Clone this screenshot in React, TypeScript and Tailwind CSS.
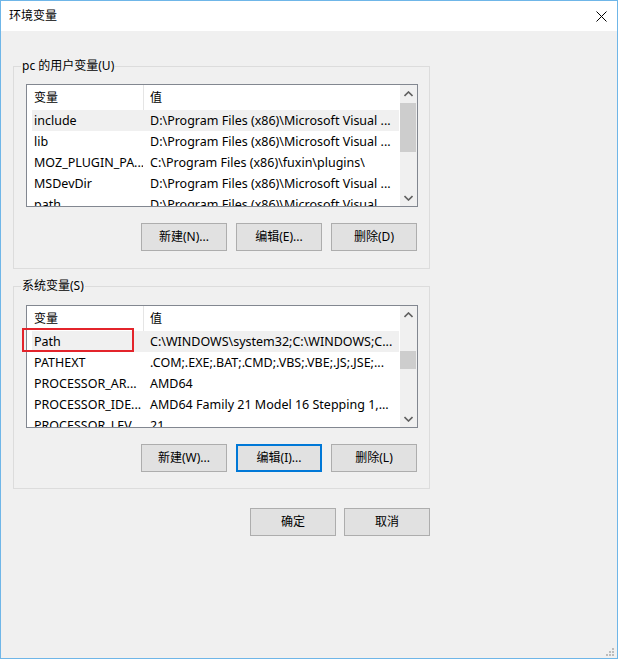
import React from "react";

type Row = [string, string];

const userVars: Row[] = [
  ["include", "D:\\Program Files (x86)\\Microsoft Visual ..."],
  ["lib", "D:\\Program Files (x86)\\Microsoft Visual ..."],
  ["MOZ_PLUGIN_PA...", "C:\\Program Files (x86)\\fuxin\\plugins\\"],
  ["MSDevDir", "D:\\Program Files (x86)\\Microsoft Visual ..."],
  ["path", "D:\\Program Files (x86)\\Microsoft Visual ..."],
];

const systemVars: Row[] = [
  ["Path", "C:\\WINDOWS\\system32;C:\\WINDOWS;C..."],
  ["PATHEXT", ".COM;.EXE;.BAT;.CMD;.VBS;.VBE;.JS;.JSE;..."],
  ["PROCESSOR_AR...", "AMD64"],
  ["PROCESSOR_IDE...", "AMD64 Family 21 Model 16 Stepping 1,..."],
  ["PROCESSOR_LEV...", "21"],
];

const font = {
  fontFamily: '"Noto Sans", "Noto Sans CJK SC", sans-serif',
};

function Chevron({ up }: { up?: boolean }) {
  return (
    <svg width="9" height="6" viewBox="0 0 9 6" className="block">
      <path
        d={up ? "M0.5 5 L4.5 1 L8.5 5" : "M0.5 1 L4.5 5 L8.5 1"}
        fill="none"
        stroke="#606060"
        strokeWidth="1.6"
      />
    </svg>
  );
}

function ScrollBar({ thumbTop, thumbHeight }: { thumbTop: number; thumbHeight: number }) {
  return (
    <div className="relative w-[17px] h-full bg-[#f0f0f0] flex flex-col justify-between">
      <div className="h-[17px] flex items-center justify-center">
        <Chevron up />
      </div>
      <div
        className="absolute left-0 w-[16px] bg-[#cdcdcd]"
        style={{ top: thumbTop, height: thumbHeight }}
      />
      <div className="h-[17px] flex items-center justify-center">
        <Chevron />
      </div>
    </div>
  );
}

function ListView({
  rows,
  thumbTop,
  thumbHeight,
}: {
  rows: Row[];
  thumbTop: number;
  thumbHeight: number;
}) {
  return (
    <div className="h-[123px] w-[392px] border border-[#828790] bg-white flex overflow-hidden">
      <div className="flex-1 flex flex-col overflow-hidden">
        <div className="h-[25px] flex shrink-0 items-center">
          <div className="w-[116px] pl-[7px] h-full flex items-center">变量</div>
          <div className="w-px h-full bg-[#e5e5e5]" />
          <div className="flex-1 pl-[6px] h-full flex items-center">值</div>
        </div>
        {rows.map(([name, value], i) => (
          <div
            key={name}
            className="h-[21px] shrink-0 flex items-center whitespace-nowrap text-[12.5px]"
          >
            <div
              className={
                "ml-[5px] mr-px h-full flex-1 flex items-center pt-px " +
                (i === 0 ? "bg-[#f0f0f0]" : "")
              }
            >
              <div className="w-[111px] pl-[2px] overflow-hidden">{name}</div>
              <div className="pl-[7px] overflow-hidden">{value}</div>
            </div>
          </div>
        ))}
      </div>
      <ScrollBar thumbTop={thumbTop} thumbHeight={thumbHeight} />
    </div>
  );
}

function Button({ label, focused }: { label: string; focused?: boolean }) {
  return (
    <div
      className={
        "w-[86px] h-[28px] bg-[#e1e1e1] flex items-center justify-center " +
        (focused ? "border-2 border-[#0078d7]" : "border border-[#adadad]")
      }
    >
      {label}
    </div>
  );
}

function GroupBox({
  title,
  padTop,
  padBottom,
  children,
}: {
  title: string;
  padTop: string;
  padBottom: string;
  children: React.ReactNode;
}) {
  return (
    <div className={"relative w-[417px] border border-[#dcdcdc] pl-[12px] pr-[11px] " + padTop + " " + padBottom}>
      <div className="absolute -top-[9px] left-[7px] px-px bg-[#f0f0f0] leading-[16px]">{title}</div>
      {children}
    </div>
  );
}

export default function App() {
  return (
    <div
      className="relative w-[618px] h-[659px] border border-[#6fb6e8] bg-[#f0f0f0] text-[12px] text-black flex flex-col"
      style={font}
    >
      {/* title bar */}
      <div className="h-[30px] bg-white flex items-center justify-between pl-[8px] pr-[10px] shrink-0">
        <span className="text-[12px] leading-none">环境变量</span>
        <svg width="11" height="11" viewBox="0 0 11 11">
          <path d="M0.5 0.5 L10.5 10.5 M10.5 0.5 L0.5 10.5" stroke="#000" strokeWidth="1" />
        </svg>
      </div>

      <div className="pl-[12px] pt-[35px] flex flex-col">
        <GroupBox title="pc 的用户变量(U)" padTop="pt-[17px]" padBottom="pb-[17px]">
          <ListView rows={userVars} thumbTop={18} thumbHeight={49} />
          <div className="mt-[16px] flex justify-end gap-[9px] pr-px">
            <Button label="新建(N)..." />
            <Button label="编辑(E)..." />
            <Button label="删除(D)" />
          </div>
        </GroupBox>

        <div className="mt-[17px]">
          <GroupBox title="系统变量(S)" padTop="pt-[18px]" padBottom="pb-[16px]">
            <div className="relative">
              <ListView rows={systemVars} thumbTop={45} thumbHeight={18} />
              {/* highlight frame around the Path entry */}
              <div className="absolute left-[-4px] top-[23px] w-[112px] h-[24px] border-2 border-[#e3242b]" />
            </div>
            <div className="mt-[16px] flex justify-end gap-[9px] pr-px">
              <Button label="新建(W)..." />
              <Button label="编辑(I)..." focused />
              <Button label="删除(L)" />
            </div>
          </GroupBox>
        </div>

        <div className="w-[417px] mt-[19px] flex justify-end gap-[8px]">
          <Button label="确定" />
          <Button label="取消" />
        </div>
      </div>

      {/* size grip */}
      <svg className="absolute right-[3px] bottom-[2px]" width="8" height="8" viewBox="0 0 8 8">
        <rect x="6" y="0" width="2" height="2" fill="#bcbcbc" />
        <rect x="3" y="3" width="2" height="2" fill="#bcbcbc" />
        <rect x="6" y="3" width="2" height="2" fill="#bcbcbc" />
        <rect x="0" y="6" width="2" height="2" fill="#bcbcbc" />
        <rect x="3" y="6" width="2" height="2" fill="#bcbcbc" />
        <rect x="6" y="6" width="2" height="2" fill="#bcbcbc" />
      </svg>
    </div>
  );
}
